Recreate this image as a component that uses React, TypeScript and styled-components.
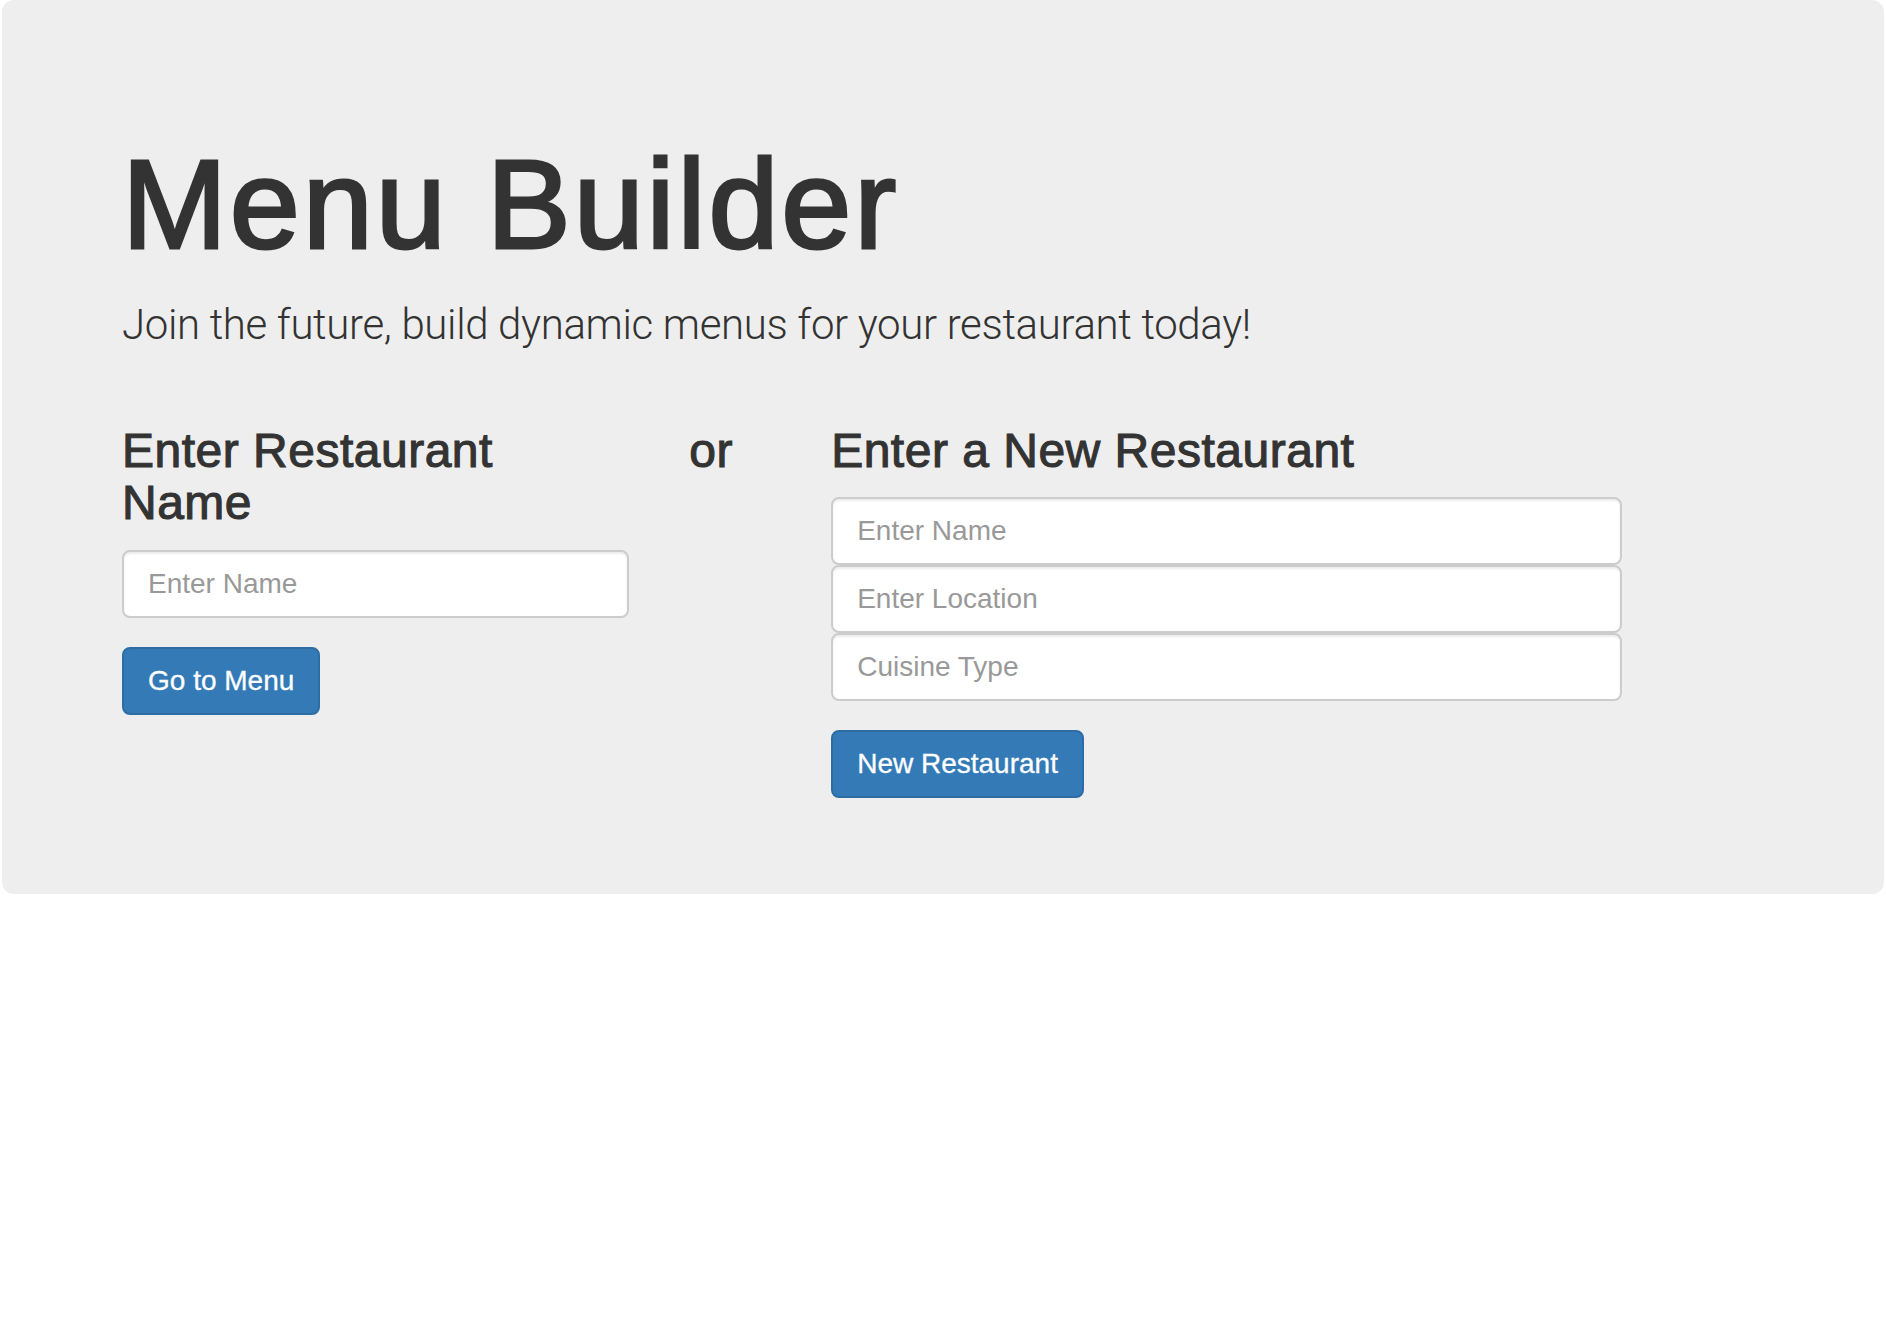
import React from "react";
import styled, { createGlobalStyle } from "styled-components";

const GlobalStyle = createGlobalStyle`
  *, *::before, *::after { box-sizing: border-box; }
  html, body { margin: 0; padding: 0; background: #fff; }
  body {
    font-family: "Liberation Sans", Helvetica, Arial, sans-serif;
    color: #333;
    font-size: 28px;
    line-height: 1.42857;
  }
`;

const Jumbotron = styled.div`
  margin: 0 2px;
  padding: 96px 120px 96px;
  background: #eee;
  border-radius: 12px;
`;

const Title = styled.h1`
  margin: 40px 0 20px;
  font-size: 126px;
  line-height: 1.1;
  font-weight: 400;
  letter-spacing: 2.9px;
  -webkit-text-stroke: 3px #333;
  color: #333;
`;

const Lead = styled.p`
  margin: 0 0 30px;
  font-family: Roboto, "Liberation Sans", Arial, sans-serif;
  font-size: 42px;
  line-height: 60px;
  font-weight: 300;
  letter-spacing: -0.35px;
  color: #333;
`;

const Row = styled.div`
  display: flex;
  margin: 0 -30px;
`;

const Col = styled.div<{ $span: number }>`
  flex: 0 0 ${(p) => (p.$span / 12) * 100}%;
  max-width: ${(p) => (p.$span / 12) * 100}%;
  padding: 0 30px;
`;

const Heading = styled.h3`
  margin: 40px 0 20px;
  font-size: 48px;
  line-height: 1.1;
  font-weight: 400;
  letter-spacing: 0.5px;
  -webkit-text-stroke: 1.1px #333;
  color: #333;
`;

const Input = styled.input`
  display: block;
  width: 100%;
  height: 68px;
  margin: 0;
  padding: 12px 24px;
  font-family: inherit;
  font-size: 28px;
  line-height: 40px;
  color: #555;
  background: #fff;
  border: 2px solid #ccc;
  border-radius: 8px;
  box-shadow: inset 0 2px 2px rgba(0, 0, 0, 0.075);
  outline: none;
  &::placeholder { color: #999; opacity: 1; }
`;

const Button = styled.button`
  display: inline-block;
  margin-top: 29px;
  padding: 12px 24px;
  font-family: inherit;
  font-size: 28px;
  line-height: 40px;
  color: #fff;
  background: #337ab7;
  border: 2px solid #2e6da4;
  border-radius: 8px;
  cursor: pointer;
  -webkit-text-stroke: 0.3px #fff;
`;

export default function App() {
  return (
    <>
      <GlobalStyle />
      <Jumbotron>
        <Title>Menu Builder</Title>
        <Lead>Join the future, build dynamic menus for your restaurant today!</Lead>
        <Row>
          <Col $span={4}>
            <Heading>Enter Restaurant Name</Heading>
            <Input placeholder="Enter Name" />
            <Button>Go to Menu</Button>
          </Col>
          <Col $span={1}>
            <Heading>or</Heading>
          </Col>
          <Col $span={6}>
            <Heading>Enter a New Restaurant</Heading>
            <Input placeholder="Enter Name" />
            <Input placeholder="Enter Location" />
            <Input placeholder="Cuisine Type" />
            <Button>New Restaurant</Button>
          </Col>
        </Row>
      </Jumbotron>
    </>
  );
}
